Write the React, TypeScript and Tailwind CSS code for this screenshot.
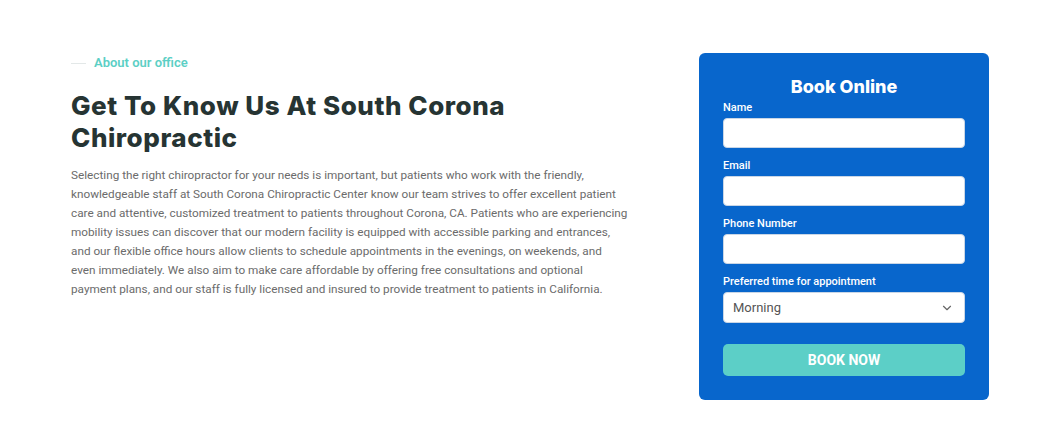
import { ChevronDown } from 'lucide-react';

const heading = { fontFamily: 'Inter, "Noto Sans", sans-serif' };
const body = { fontFamily: 'Roboto, "Liberation Sans", sans-serif' };

const lines = [
  'Selecting the right chiropractor for your needs is important, but patients who work with the friendly,',
  'knowledgeable staff at South Corona Chiropractic Center know our team strives to offer excellent patient',
  'care and attentive, customized treatment to patients throughout Corona, CA. Patients who are experiencing',
  'mobility issues can discover that our modern facility is equipped with accessible parking and entrances,',
  'and our flexible office hours allow clients to schedule appointments in the evenings, on weekends, and',
  'even immediately. We also aim to make care affordable by offering free consultations and optional',
  'payment plans, and our staff is fully licensed and insured to provide treatment to patients in California.',
];

function Field({ label }: { label: string }) {
  return (
    <div className="flex flex-col">
      <label className="h-4 text-[11px] leading-4 font-medium text-white">{label}</label>
      <input className="mt-[2px] h-[30px] w-full rounded-[4px] border border-[#c9d6e6] bg-white px-2 text-[13px] outline-none" />
    </div>
  );
}

export default function App() {
  return (
    <div className="min-h-[442px] w-full bg-white" style={body}>
      <div className="flex justify-between pl-[71px] pr-[71px] pt-[53px]">
        <div className="w-[562px]">
          <div className="flex h-[20px] items-center">
            <span className="h-px w-[15px] bg-[#e3e8e8]" />
            <span className="ml-[8px] text-[13px] font-semibold text-[#5ccfc5]">About our office</span>
          </div>
          <h1 className="mt-[17px] text-[26px] leading-[32px] font-extrabold tracking-[0.55px] text-[#263433]" style={heading}>
            Get To Know Us At South Corona Chiropractic
          </h1>
          <p className="mt-[12px] text-[11.75px] leading-[19px] text-[#6b6b6b]">
            {lines.map((line) => (
              <span key={line} className="block whitespace-nowrap">
                {line}
              </span>
            ))}
          </p>
        </div>
        <div className="w-[290px] rounded-md bg-[#0866cc] px-[24px] pt-[22px] pb-[24px]">
          <h2 className="text-center text-[18px] leading-6 font-extrabold text-white" style={heading}>
            Book Online
          </h2>
          <div className="mt-[1px] flex flex-col gap-[10px]">
            <Field label="Name" />
            <Field label="Email" />
            <Field label="Phone Number" />
            <div className="flex flex-col">
              <label className="h-4 text-[11px] leading-4 font-medium text-white">Preferred time for appointment</label>
              <div className="mt-[2px] flex h-[31px] items-center justify-between rounded-[4px] border border-[#c9d6e6] bg-white pl-[9px] pr-[10px]">
                <span className="text-[13px] text-[#555]">Morning</span>
                <ChevronDown size={14} strokeWidth={2} className="text-[#666]" />
              </div>
            </div>
          </div>
          <button className="mt-[21px] h-[32px] w-full rounded-[5px] bg-[#5ccfc7] text-[14px] font-bold text-white">
            BOOK NOW
          </button>
        </div>
      </div>
    </div>
  );
}
